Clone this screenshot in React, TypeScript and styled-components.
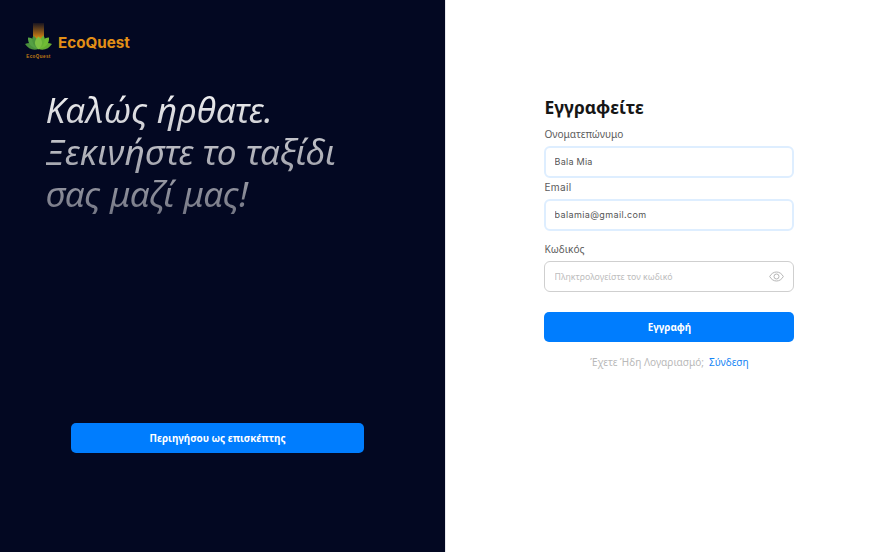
import React from 'react';
import styled, { createGlobalStyle } from 'styled-components';

const GlobalStyle = createGlobalStyle`
  *, *::before, *::after { box-sizing: border-box; }
  body { margin: 0; background: #fff; font-family: "Noto Sans", sans-serif; }
`;

const Page = styled.div`
  display: grid;
  grid-template-columns: 445px 1fr;
  width: 895px;
  height: 552px;
  overflow: hidden;
`;

const Welcome = styled.section`
  display: flex;
  flex-direction: column;
  background: #030822;
`;

const Brand = styled.header`
  display: flex;
  align-items: flex-start;
  gap: 6px;
  padding: 23px 0 0 25px;
  height: 88px;
`;

const Emblem = styled.div`
  width: 27px;
  display: flex;
  flex-direction: column;
  align-items: center;
`;

const EmblemCaption = styled.span`
  font: 700 4.5px/6px "Liberation Sans", sans-serif;
  letter-spacing: 0.45px;
  color: #c47d12;
  margin-top: 3px;
`;

const BrandName = styled.span`
  font: 700 15.2px/20px Inter, sans-serif;
  color: #e28f16;
  margin-top: 10px;
`;

const Headline = styled.h1`
  margin: 0 0 0 45.5px;
  width: 330px;
  font: italic 400 35.3px/42px "Noto Sans", sans-serif;
  color: transparent;
  background: linear-gradient(180deg, #f6f6f7 0%, #747684 100%);
  background-clip: text;
  -webkit-background-clip: text;
`;

const Line = styled.span`
  display: block;
  white-space: nowrap;
`;

const Button = styled.button`
  height: 30px;
  padding: 0;
  border: 0;
  border-radius: 5px;
  background: #007dfe;
  color: #fff;
  font: 700 9.9px/30px "Noto Sans", sans-serif;
`;

const GuestButton = styled(Button)`
  width: 293px;
  margin: auto 0 99.5px 71px;
`;

const SignUp = styled.main`
  border-left: 1px solid #e8e8ec;
  padding: 94px 0 0 98.4px;
`;

const Form = styled.form`
  display: flex;
  flex-direction: column;
  width: 250px;
`;

const Title = styled.h2`
  margin: 0;
  font: 700 17.5px/26px "Noto Sans", sans-serif;
  color: #161616;
`;

const Label = styled.label<{ $top: number }>`
  margin-top: ${(p) => p.$top}px;
  height: 20px;
  font: 400 10.1px/20px "Noto Sans", sans-serif;
  color: #5c5c5c;
`;

const Latin = styled.span`
  font-family: Inter, sans-serif;
  letter-spacing: 0.35px;
`;

const Field = styled.div<{ $filled?: boolean }>`
  display: flex;
  align-items: center;
  height: ${(p) => (p.$filled ? 32 : 31)}px;
  margin-top: 2px;
  padding: 0 9px 0 ${(p) => (p.$filled ? 8.2 : 9.2)}px;
  border: ${(p) => (p.$filled ? '2px solid #deeeff' : '1px solid #cfcfcf')};
  border-radius: 6px;
`;

const Input = styled.input<{ $track?: number }>`
  flex: 1;
  min-width: 0;
  padding: 0;
  border: 0;
  outline: 0;
  background: transparent;
  font: 400 9px/14px Inter, "Noto Sans", sans-serif;
  letter-spacing: ${(p) => p.$track ?? 0}px;
  color: #555;
  &::placeholder {
    color: #bdbdbd;
    opacity: 1;
    font-family: "Noto Sans", sans-serif;
    font-size: 8.75px;
  }
`;

const SubmitButton = styled(Button)`
  margin-top: 19.6px;
`;

const Footer = styled.p`
  display: flex;
  justify-content: center;
  gap: 5px;
  margin: 10.4px 0 0 0;
  font: 400 10.1px/20px "Noto Sans", sans-serif;
  color: #b9b9b9;
`;

const SignInLink = styled.a`
  color: #1685f5;
`;

function Lotus() {
  return (
    <svg width="27" height="28" viewBox="0 0 27 28">
      <defs>
        <linearGradient id="glow" x1="0" y1="0" x2="0" y2="1">
          <stop offset="0" stopColor="#db8712" stopOpacity="0.1" />
          <stop offset="0.9" stopColor="#e58d12" />
        </linearGradient>
      </defs>
      <rect x="8" y="0" width="11" height="18" fill="url(#glow)" />
      <path d="M13.500 26C8 28 3 25.500 0 21C5 19 10 20 13.500 26Z" fill="#4a8f3c" />
      <path d="M13.500 26C19 28 24 25.500 27 21C22 19 17 20 13.500 26Z" fill="#64ab33" />
      <path d="M13.500 26C6 25 2.500 20 3 14.500C9 15 13 19 13.500 26Z" fill="#55a044" />
      <path d="M13.500 26C21 25 24.500 20 24 14.500C18 15 14 19 13.500 26Z" fill="#70bc34" />
      <path d="M13.500 26C7 22 6 16 8.500 12.500C13 16 15 21 13.500 26Z" fill="#4d943c" />
      <path d="M13.500 26C20 22 21 16 18.500 12.500C14 16 12 21 13.500 26Z" fill="#68b236" />
      <path d="M13.500 26.500C8.500 22 9 17 13.500 13.500C18 17 18.500 22 13.500 26.500Z" fill="#7cc043" />
    </svg>
  );
}

function EyeIcon() {
  return (
    <svg width="15" height="11" viewBox="0 0 15 11" fill="none" stroke="#b5b5b5">
      <path d="M.7 5.500C3.800-.5 11.200-.5 14.300 5.500C11.200 11.500 3.800 11.500.7 5.500Z" />
      <circle cx="7.500" cy="5.500" r="2.500" />
    </svg>
  );
}

export default function App() {
  return (
    <>
      <GlobalStyle />
      <Page>
        <Welcome>
          <Brand>
            <Emblem>
              <Lotus />
              <EmblemCaption>EcoQuest</EmblemCaption>
            </Emblem>
            <BrandName>EcoQuest</BrandName>
          </Brand>
          <Headline>
            <Line>Καλώς ήρθατε.</Line>
            <Line>Ξεκινήστε το ταξίδι</Line>
            <Line>σας μαζί μας!</Line>
          </Headline>
          <GuestButton type="button">Περιηγήσου ως επισκέπτης</GuestButton>
        </Welcome>
        <SignUp>
          <Form>
            <Title>Εγγραφείτε</Title>
            <Label htmlFor="name" $top={4}>Ονοματεπώνυμο</Label>
            <Field $filled>
              <Input id="name" defaultValue="Bala Mia" $track={0.25} />
            </Field>
            <Label htmlFor="email" $top={-1}><Latin>Email</Latin></Label>
            <Field $filled>
              <Input id="email" defaultValue="balamia@gmail.com" $track={0.38} />
            </Field>
            <Label htmlFor="password" $top={8.4}>Κωδικός</Label>
            <Field>
              <Input id="password" type="password" placeholder="Πληκτρολογείστε τον κωδικό" />
              <EyeIcon />
            </Field>
            <SubmitButton type="button">Εγγραφή</SubmitButton>
            <Footer>
              <span>Έχετε Ήδη Λογαριασμό;</span>
              <SignInLink>Σύνδεση</SignInLink>
            </Footer>
          </Form>
        </SignUp>
      </Page>
    </>
  );
}
